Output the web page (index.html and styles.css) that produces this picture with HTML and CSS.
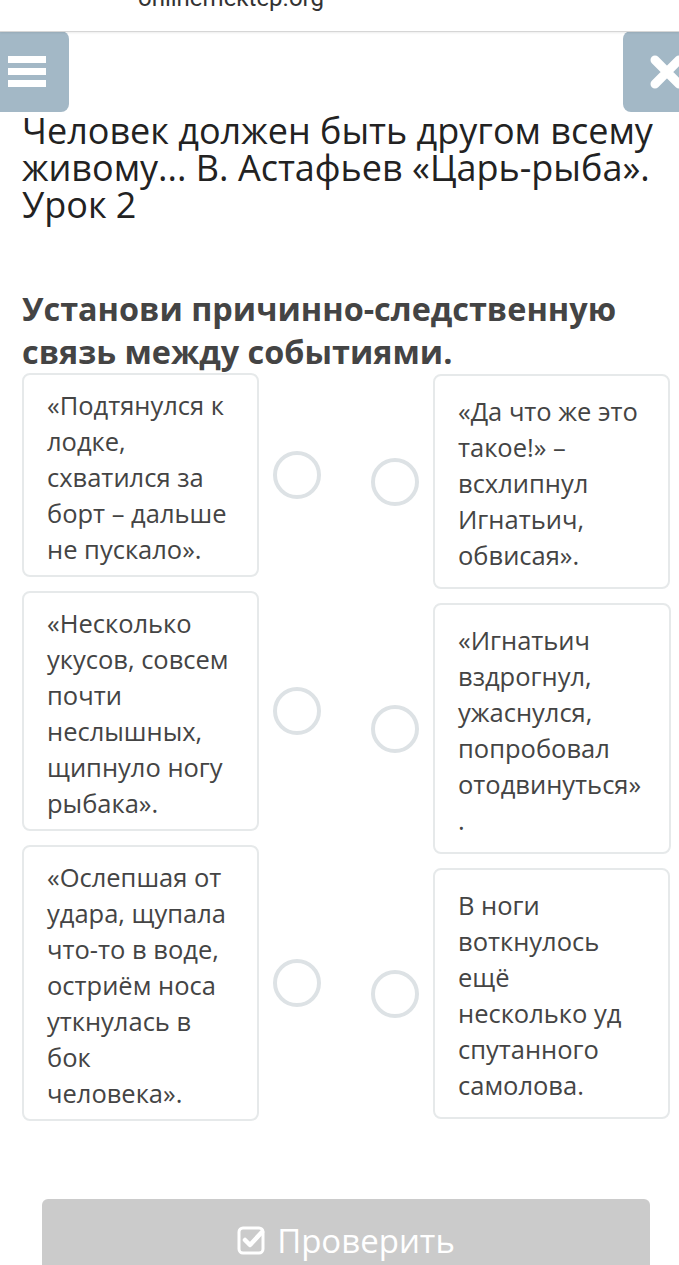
FILE: index.html
```html
<!DOCTYPE html>
<html lang="ru">
<head>
    <meta charset="UTF-8">
    <meta name="viewport" content="width=device-width, initial-scale=1.0">
    <title>Установи причинно-следственную связь</title>
    <link rel="stylesheet" href="styles.css">
</head>
<body>
    <div class="address-bar">
        <span class="address">onlinemektep.org</span>
    </div>

    <div class="toolbar">
        <button class="tool-btn menu-btn" aria-label="Меню">
            <span class="bar"></span>
            <span class="bar"></span>
            <span class="bar"></span>
        </button>
        <button class="tool-btn close-btn" aria-label="Закрыть">
            <svg width="36" height="34" viewBox="0 0 36 34">
                <path d="M6 5 L30 29 M30 5 L6 29" stroke="#fff" stroke-width="9" stroke-linecap="round"/>
            </svg>
        </button>
    </div>

    <div class="content">
        <h1 class="lesson-title">Человек должен быть другом всему живому... В. Астафьев «Царь-рыба». Урок 2</h1>

        <h2 class="task">Установи причинно-следственную связь между событиями.</h2>

        <div class="match">
            <div class="column left">
                <div class="item">
                    <div class="card">«Подтянулся к лодке, схватился за борт – дальше не пускало».</div>
                    <span class="dot"></span>
                </div>
                <div class="item">
                    <div class="card">«Несколько укусов, совсем почти неслышных, щипнуло ногу рыбака».</div>
                    <span class="dot"></span>
                </div>
                <div class="item">
                    <div class="card">«Ослепшая от удара, щупала что-то в воде, остриём носа уткнулась в бок человека».</div>
                    <span class="dot"></span>
                </div>
            </div>

            <div class="column right">
                <div class="item">
                    <span class="dot"></span>
                    <div class="card">«Да что же это такое!» – всхлипнул Игнатьич, обвисая».</div>
                </div>
                <div class="item">
                    <span class="dot"></span>
                    <div class="card">«Игнатьич вздрогнул, ужаснулся, попробовал отодвинуться» .</div>
                </div>
                <div class="item">
                    <span class="dot"></span>
                    <div class="card">В ноги воткнулось ещё несколько уд спутанного самолова.</div>
                </div>
            </div>
        </div>

        <button class="check-btn">
            <svg width="30" height="30" viewBox="0 0 30 30">
                <rect x="2" y="3" width="24" height="25" rx="4" fill="none" stroke="#fff" stroke-width="3"/>
                <path d="M8 15 L13 20 L25 7" fill="none" stroke="#fff" stroke-width="4.5" stroke-linecap="round" stroke-linejoin="round"/>
            </svg>
            Проверить
        </button>
    </div>
</body>
</html>
```

FILE: styles.css
```css
body {
    margin: 0;
    background: #fff;
    font-family: "Open Sans", Arial, sans-serif;
    color: #444;
    overflow: hidden;
}
.address-bar {
    height: 31px;
    overflow: hidden;
    background: #fff;
    border-bottom: 1px solid #d6d6d6;
    box-shadow: 0 1px 2px rgba(0,0,0,0.08);
    position: relative;
    z-index: 2;
}
.address {
    display: block;
    margin-top: -15px;
    padding-left: 138px;
    font-family: Roboto, Arial, sans-serif;
    font-size: 24px;
    line-height: 26px;
    color: #333;
}
.toolbar {
    display: flex;
    justify-content: space-between;
    height: 81px;
    margin-top: -1px;
}
.tool-btn {
    height: 81px;
    border: none;
    background: #a3b8c6;
    padding: 0;
    display: flex;
    flex-direction: column;
    justify-content: center;
}
.menu-btn {
    width: 69px;
    border-radius: 0 8px 8px 0;
    gap: 5px;
    align-items: flex-start;
    padding-left: 8px;
}
.bar {
    display: block;
    width: 38px;
    height: 7px;
    background: #fff;
}
.close-btn {
    width: 56px;
    border-radius: 8px 0 0 8px;
    align-items: flex-start;
    padding-left: 26px;
    overflow: hidden;
}
.content {
    padding: 0 9px 0 22px;
}
.lesson-title {
    margin: 0;
    font-size: 36px;
    line-height: 37px;
    font-weight: 400;
    color: #222;
}
.task {
    margin: 64px 0 0;
    font-size: 32.4px;
    line-height: 43px;
    font-weight: 700;
    color: #444;
}
.match {
    display: flex;
    gap: 50px;
    margin-top: 0;
}
.column {
    display: flex;
    flex-direction: column;
    gap: 14px;
    width: 299px;
}
.right {
    margin-top: 1px;
}
.item {
    display: flex;
    align-items: center;
    gap: 14px;
}
.card {
    width: 238px;
    box-sizing: border-box;
    padding: 12px 27.5px 8px 23px;
    border: 2px solid #e6e9ea;
    border-radius: 8px;
    font-size: 25.5px;
    line-height: 36px;
    color: #444;
}
.right .card {
    padding-top: 17px;
    padding-bottom: 14px;
}
.dot {
    flex: none;
    width: 48px;
    height: 48px;
    box-sizing: border-box;
    border: 4px solid #dde2e5;
    border-radius: 50%;
}
.check-btn {
    display: flex;
    align-items: center;
    justify-content: center;
    gap: 10px;
    width: 608px;
    height: 90px;
    margin: 78px 0 0 20px;
    padding: 0 0 8px;
    border: none;
    border-radius: 6px;
    background: #cbcbcb;
    color: #fff;
    font-family: "Open Sans", Arial, sans-serif;
    font-size: 33px;
}
```
